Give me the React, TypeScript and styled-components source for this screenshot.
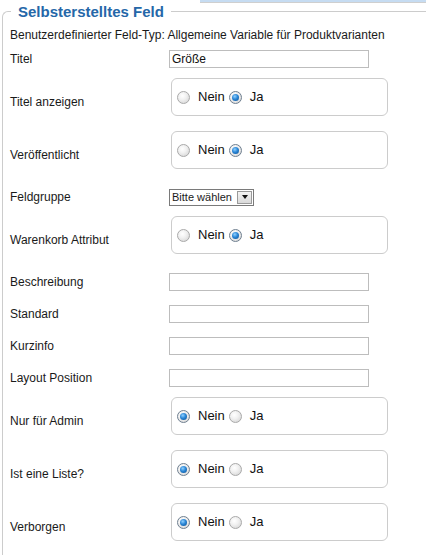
import React from 'react';
import styled, { createGlobalStyle } from 'styled-components';

type Field =
  | { kind: 'text'; label: string; value?: string }
  | { kind: 'radio'; label: string; yes: boolean }
  | { kind: 'select'; label: string; value: string };

const fields: Field[] = [
  { kind: 'text', label: 'Titel', value: 'Größe' },
  { kind: 'radio', label: 'Titel anzeigen', yes: true },
  { kind: 'radio', label: 'Veröffentlicht', yes: true },
  { kind: 'select', label: 'Feldgruppe', value: 'Bitte wählen' },
  { kind: 'radio', label: 'Warenkorb Attribut', yes: true },
  { kind: 'text', label: 'Beschreibung' },
  { kind: 'text', label: 'Standard' },
  { kind: 'text', label: 'Kurzinfo' },
  { kind: 'text', label: 'Layout Position' },
  { kind: 'radio', label: 'Nur für Admin', yes: false },
  { kind: 'radio', label: 'Ist eine Liste?', yes: false },
  { kind: 'radio', label: 'Verborgen', yes: false },
];

const App = () => (
  <>
    <GlobalStyle />
    <TopStrip />
    <FieldSet>
      <Legend>Selbsterstelltes Feld</Legend>
      <TypeLine>Benutzerdefinierter Feld-Typ: Allgemeine Variable für Produktvarianten</TypeLine>
      {fields.map((field) => (
        <Row key={field.label} $tall={field.kind === 'radio'}>
          <Label>{field.label}</Label>
          {field.kind === 'text' && <TextInput defaultValue={field.value ?? ''} />}
          {field.kind === 'select' && (
            <Select>
              <SelectText>{field.value}</SelectText>
              <SelectButton>
                <Arrow />
              </SelectButton>
            </Select>
          )}
          {field.kind === 'radio' && (
            <RadioBox>
              <Radio $checked={!field.yes} />
              <RadioText>Nein</RadioText>
              <Radio $checked={field.yes} />
              <RadioText>Ja</RadioText>
            </RadioBox>
          )}
        </Row>
      ))}
    </FieldSet>
  </>
);

const GlobalStyle = createGlobalStyle`
  html, body {
    margin: 0;
    padding: 0;
    overflow: hidden;
    background: #fff;
    font-family: "Liberation Sans", Arial, sans-serif;
    font-size: 12px;
    color: #1a1a1a;
  }
`;

const TopStrip = styled.div`
  margin-left: 200px;
  height: 2px;
  background: #c6dcf2;
  border-bottom: 1px solid #cfcfcf;
  margin-bottom: 1px;
`;

const FieldSet = styled.fieldset`
  margin: 0 0 0 2px;
  padding: 0 7px 10px 7px;
  border: 1px solid #cccccc;
  border-right: none;
  border-top-left-radius: 6px;
  min-width: 0;
`;

const Legend = styled.legend`
  margin-left: 1px;
  padding: 0 7px;
  font-size: 15px;
  line-height: 15px;
  font-weight: bold;
  color: #2567a8;
`;

const TypeLine = styled.div`
  box-sizing: border-box;
  height: 24px;
  padding-top: 9px;
  line-height: 14px;
`;

const Row = styled.div<{ $tall: boolean }>`
  display: grid;
  grid-template-columns: 159px 1fr;
  align-items: center;
  height: ${({ $tall }) => ($tall ? '53px' : '32px')};
`;

const Label = styled.div`
  line-height: 14px;
`;

const TextInput = styled.input`
  box-sizing: border-box;
  width: 200px;
  height: 18px;
  margin: 0;
  padding: 0 2px;
  border: 1px solid #bdbdbd;
  font-family: "Liberation Sans", Arial, sans-serif;
  font-size: 12px;
  color: #111;
  outline: none;
`;

const Select = styled.div`
  box-sizing: border-box;
  display: flex;
  align-items: center;
  width: 85px;
  height: 17px;
  margin-left: 0;
  border: 1px solid #7a7a7a;
  background: #fff;
`;

const SelectText = styled.span`
  flex: 1;
  padding-left: 2px;
  font-size: 11px;
  line-height: 14px;
  white-space: nowrap;
`;

const SelectButton = styled.span`
  box-sizing: border-box;
  display: flex;
  align-items: center;
  justify-content: center;
  width: 15px;
  height: 13px;
  margin-right: 1px;
  border: 1px solid #9a9a9a;
  background: linear-gradient(#f4f4f4, #d9d9d9);
`;

const Arrow = styled.span`
  width: 0;
  height: 0;
  border-left: 3.5px solid transparent;
  border-right: 3.5px solid transparent;
  border-top: 4px solid #111;
`;

const RadioBox = styled.div`
  box-sizing: border-box;
  align-self: start;
  display: flex;
  align-items: center;
  width: 217px;
  height: 38px;
  margin: 3px 0 0 2px;
  padding-left: 1px;
  border: 1px solid #cccccc;
  border-radius: 6px;
`;

const Radio = styled.span<{ $checked: boolean }>`
  position: relative;
  box-sizing: border-box;
  width: 13px;
  height: 13px;
  margin: 0 8px 0 4px;
  border-radius: 50%;
  border: 1px solid ${({ $checked }) => ($checked ? '#6f7f90' : '#a9a9a9')};
  background: radial-gradient(circle at 40% 35%, #ffffff 0%, #f1f1f1 40%, #cfcfcf 100%);

  &::after {
    content: '';
    display: ${({ $checked }) => ($checked ? 'block' : 'none')};
    position: absolute;
    left: 2px;
    top: 2px;
    width: 7px;
    height: 7px;
    border-radius: 50%;
    background: radial-gradient(circle at 40% 35%, #8fd0ff 0%, #2a86d6 45%, #0a4c8e 100%);
  }
`;

const RadioText = styled.span`
  font-size: 13px;
  line-height: 14px;
  color: #111;
`;

export default App;
